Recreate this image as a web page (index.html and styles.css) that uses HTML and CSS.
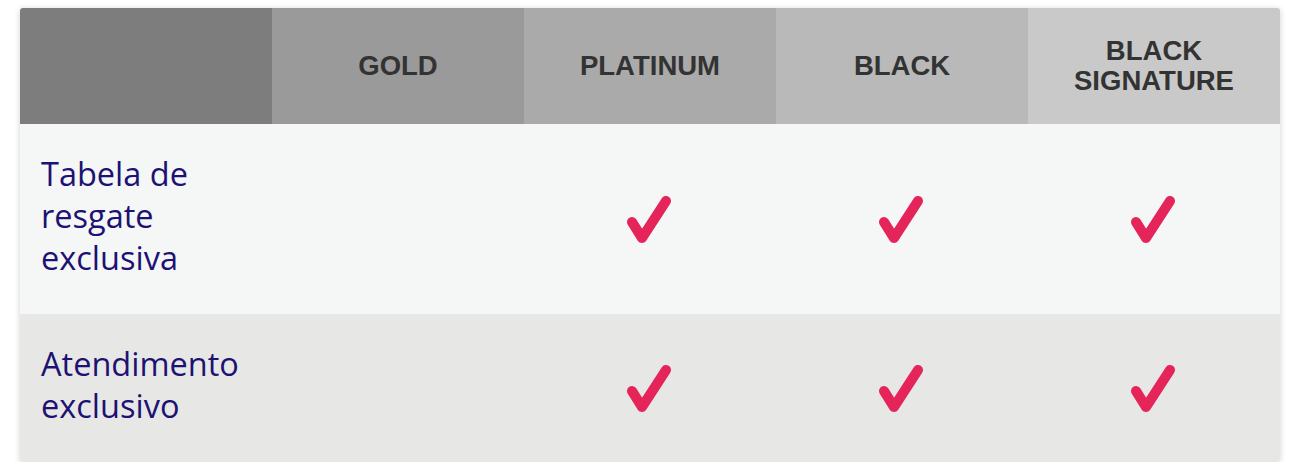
FILE: index.html
```html
<!DOCTYPE html>
<html lang="pt">
<head>
<meta charset="utf-8">
<link rel="stylesheet" href="styles.css">
</head>
<body>
<div class="table">
  <div class="head c0"></div>
  <div class="head c1">GOLD</div>
  <div class="head c2">PLATINUM</div>
  <div class="head c3">BLACK</div>
  <div class="head c4">BLACK<br>SIGNATURE</div>

  <div class="cell label r1">Tabela de<br>resgate<br>exclusiva</div>
  <div class="cell r1"></div>
  <div class="cell r1"><svg class="check" viewBox="0 0 48 52"><path d="M6 29 L16 45 L40 8"/></svg></div>
  <div class="cell r1"><svg class="check" viewBox="0 0 48 52"><path d="M6 29 L16 45 L40 8"/></svg></div>
  <div class="cell r1"><svg class="check" viewBox="0 0 48 52"><path d="M6 29 L16 45 L40 8"/></svg></div>

  <div class="cell label r2">Atendimento<br>exclusivo</div>
  <div class="cell r2"></div>
  <div class="cell r2"><svg class="check" viewBox="0 0 48 52"><path d="M6 29 L16 45 L40 8"/></svg></div>
  <div class="cell r2"><svg class="check" viewBox="0 0 48 52"><path d="M6 29 L16 45 L40 8"/></svg></div>
  <div class="cell r2"><svg class="check" viewBox="0 0 48 52"><path d="M6 29 L16 45 L40 8"/></svg></div>
</div>
</body>
</html>
```
FILE: styles.css
```css
html, body {
  margin: 0;
  background: #ffffff;
}
body {
  padding: 8px 30px 0 20px;
}
.table {
  width: 1260px;
  display: grid;
  grid-template-columns: repeat(5, 252px);
  grid-template-rows: 116px 190px 148px;
  border-radius: 3px;
  overflow: hidden;
  box-shadow: 0 1px 6px rgba(0, 0, 0, 0.18);
}
.head {
  display: flex;
  align-items: center;
  justify-content: center;
  text-align: center;
  font-family: "Liberation Sans", Arial, sans-serif;
  font-weight: bold;
  font-size: 27.5px;
  line-height: 30px;
  color: #333333;
}
.c0 { background: #7d7d7d; }
.c1 { background: #9a9a9a; }
.c2 { background: #aaaaaa; }
.c3 { background: #b9b9b9; }
.c4 { background: #c9c9c9; }
.cell {
  display: flex;
  align-items: center;
  justify-content: center;
}
.r1 { background: #f5f6f6; }
.r2 { background: #e7e7e6; }
.label {
  justify-content: flex-start;
  padding-left: 21px;
  padding-bottom: 7px;
  font-family: "Open Sans", sans-serif;
  font-size: 32.5px;
  line-height: 42px;
  color: #1d1273;
}
.check {
  width: 48px;
  height: 52px;
  fill: none;
  stroke: #e5245a;
  stroke-width: 10;
  stroke-linecap: round;
  stroke-linejoin: round;
}
```
